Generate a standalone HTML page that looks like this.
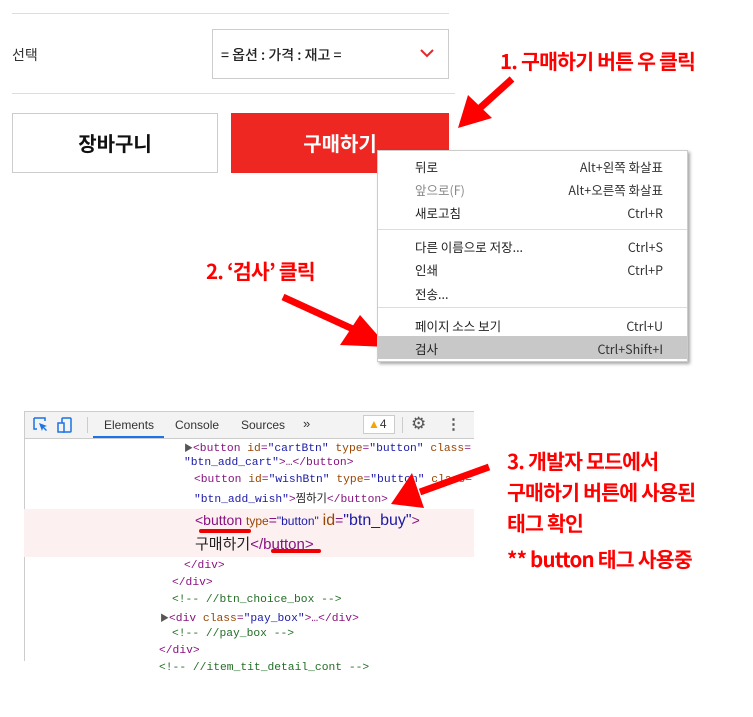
<!DOCTYPE html>
<html><head><meta charset="utf-8"><style>
*{margin:0;padding:0;box-sizing:border-box}
body{width:753px;height:717px;background:#fff;position:relative;overflow:hidden;font-family:"Liberation Sans","Noto Sans CJK KR",sans-serif}
.a{position:absolute}
.ann{position:absolute;color:#f00;font-weight:bold;font-size:20.5px;font-family:"Noto Sans CJK KR",sans-serif;letter-spacing:-0.8px;line-height:31px}
.mi{position:absolute;left:415px;font-size:12.5px;color:#222;font-family:"Noto Sans CJK KR",sans-serif}
.mr{position:absolute;right:90px;font-size:12.5px;color:#333;font-family:"Noto Sans CJK KR",sans-serif;text-align:right}
.clip{position:absolute;left:25px;top:439px;width:449px;height:240px;overflow:hidden}
.code{position:absolute;font-family:"Liberation Mono","Noto Sans CJK KR",monospace;font-size:11.3px;white-space:pre;color:#881280}
.at{color:#994500}.av{color:#1a1aa6}.cm{color:#236e25}.tx{color:#222}
</style></head><body>
<div class="a" style="left:12px;top:13px;width:437px;height:1px;background:#ddd"></div>
<div class="a" style="left:12px;top:93px;width:443px;height:1px;background:#ddd"></div>
<div class="a" style="left:12px;top:45px;font-size:14px;color:#333;font-family:'Noto Sans CJK KR',sans-serif">선택</div>
<div class="a" style="left:212px;top:29px;width:237px;height:50px;border:1px solid #ccc"></div>
<div class="a" style="left:221px;top:45px;font-size:14px;color:#222;font-family:'Noto Sans CJK KR',sans-serif;font-weight:500">= 옵션 : 가격 : 재고 =</div>
<svg class="a" style="left:420px;top:49px" width="14" height="9"><path d="M1 1 L7 7 L13 1" stroke="#e8262a" stroke-width="2" fill="none"/></svg>
<div class="a" style="left:12px;top:113px;width:206px;height:60px;border:1px solid #ccc;text-align:center;line-height:58px;font-size:20px;font-weight:bold;color:#111;font-family:'Noto Sans CJK KR',sans-serif">장바구니</div>
<div class="a" style="left:231px;top:113px;width:218px;height:60px;background:#ee2723;text-align:center;line-height:60px;font-size:20px;font-weight:bold;color:#fff;font-family:'Noto Sans CJK KR',sans-serif">구매하기</div>

<svg class="a" style="left:0;top:0" width="753" height="717">
<line x1="283" y1="297" x2="355" y2="330" stroke="#f00" stroke-width="7"/>
<polygon points="388,347 340,345 360,315" fill="#f00"/>
</svg>

<div class="a" style="left:377px;top:150px;width:311px;height:212px;background:#fff;border:1px solid #ccc;box-shadow:2px 2px 3px rgba(0,0,0,.35)"></div>
<div class="a" style="left:378px;top:229px;width:309px;height:1px;background:#ddd"></div>
<div class="a" style="left:378px;top:307px;width:309px;height:1px;background:#ddd"></div>
<div class="a" style="left:378px;top:336px;width:309px;height:23px;background:#c8c8c8"></div>
<div class="mi" style="top:157px">뒤로</div><div class="mr" style="top:157px">Alt+왼쪽 화살표</div>
<div class="mi" style="top:180px;color:#888">앞으로(F)</div><div class="mr" style="top:180px">Alt+오른쪽 화살표</div>
<div class="mi" style="top:203px">새로고침</div><div class="mr" style="top:203px">Ctrl+R</div>
<div class="mi" style="top:237px">다른 이름으로 저장...</div><div class="mr" style="top:237px">Ctrl+S</div>
<div class="mi" style="top:260px">인쇄</div><div class="mr" style="top:260px">Ctrl+P</div>
<div class="mi" style="top:284px">전송...</div>
<div class="mi" style="top:316px">페이지 소스 보기</div><div class="mr" style="top:316px">Ctrl+U</div>
<div class="mi" style="top:339px">검사</div><div class="mr" style="top:339px">Ctrl+Shift+I</div>

<div class="ann" style="left:500px;top:45px">1. 구매하기 버튼 우 클릭</div>
<div class="ann" style="left:206px;top:255px">2. ‘검사’ 클릭</div>
<div class="ann" style="left:507px;top:445px">3. 개발자 모드에서<br>구매하기 버튼에 사용된<br>태그 확인</div>
<div class="ann" style="left:507px;top:543px">** button 태그 사용중</div>

<!-- devtools -->
<div class="a" style="left:24px;top:411px;width:450px;height:28px;background:#f3f3f3;border-top:1px solid #ccc;border-bottom:1px solid #ccc"></div>
<div class="a" style="left:24px;top:411px;width:1px;height:250px;background:#ccc"></div>
<svg class="a" style="left:33px;top:416px" width="50" height="18"><path d="M1 2h11v3M1 2v11h3" stroke="#1a73e8" stroke-width="1.5" fill="none"/><path d="M6 7l8 3-3 1 3 3-1 1-3-3-1 3z" fill="#1a73e8"/><rect x="29" y="2" width="9" height="14" rx="1" stroke="#1a73e8" stroke-width="1.5" fill="none"/><rect x="25" y="7" width="6" height="9" stroke="#1a73e8" stroke-width="1.5" fill="#f3f3f3"/></svg>
<div class="a" style="left:87px;top:417px;width:1px;height:16px;background:#ccc"></div>
<div class="a" style="left:104px;top:418px;font-size:12px;color:#333">Elements</div>
<div class="a" style="left:93px;top:436px;width:71px;height:2px;background:#1a73e8"></div>
<div class="a" style="left:175px;top:418px;font-size:12px;color:#333">Console</div>
<div class="a" style="left:241px;top:418px;font-size:12px;color:#333">Sources</div>
<div class="a" style="left:303px;top:416px;font-size:13px;color:#333">»</div>
<div class="a" style="left:363px;top:415px;width:32px;height:19px;border:1px solid #ccc;background:#fff;font-size:12px;color:#333;line-height:17px;padding-left:4px"><span style="color:#f2a600">▲</span>4</div>
<div class="a" style="left:402px;top:417px;width:1px;height:16px;background:#ccc"></div>
<div class="a" style="left:411px;top:414px;font-size:17px;color:#555">⚙</div>
<div class="a" style="left:446px;top:415px;font-size:15px;color:#555;font-weight:bold">⋮</div>

<div class="a" style="left:24px;top:509px;width:450px;height:48px;background:#fdf0f0"></div>
<div class="clip">
<div class="code" style="left:159px;top:2px"><span style="color:#555;font-size:9px">▶</span>&lt;button <span class="at">id</span>=<span class="av">"cartBtn"</span> <span class="at">type</span>=<span class="av">"button"</span> <span class="at">class</span>=</div>
<div class="code" style="left:159px;top:18px"><span class="av">"btn_add_cart"</span>&gt;…&lt;/button&gt;</div>
<div class="code" style="left:169px;top:35px">&lt;button <span class="at">id</span>=<span class="av">"wishBtn"</span> <span class="at">type</span>=<span class="av">"button"</span> <span class="at">class</span>=</div>
<div class="code" style="left:169px;top:51px"><span class="av">"btn_add_wish"</span>&gt;<span class="tx" style="font-family:'Noto Sans CJK KR'">찜하기</span>&lt;/button&gt;</div>
<div class="code" style="left:170px;top:73px;font-family:'Liberation Sans','Noto Sans CJK KR',sans-serif;font-size:14px">&lt;button <span class="at" style="font-size:12px">type</span>=<span class="av" style="font-size:12px">"button"</span> <span class="at" style="font-size:16px">id</span>=<span class="av" style="font-size:16px">"btn_buy"</span>&gt;</div>
<div class="code" style="left:170px;top:94px;font-family:'Liberation Sans','Noto Sans CJK KR',sans-serif;font-size:15px"><span class="tx">구매하기</span>&lt;/button&gt;</div>
<div class="code" style="left:159px;top:121px">&lt;/div&gt;</div>
<div class="code" style="left:147px;top:138px">&lt;/div&gt;</div>
<div class="code cm" style="left:147px;top:155px">&lt;!-- //btn_choice_box --&gt;</div>
<div class="code" style="left:135px;top:172px"><span style="color:#555;font-size:9px">▶</span>&lt;div <span class="at">class</span>=<span class="av">"pay_box"</span>&gt;…&lt;/div&gt;</div>
<div class="code cm" style="left:147px;top:189px">&lt;!-- //pay_box --&gt;</div>
<div class="code" style="left:134px;top:206px">&lt;/div&gt;</div>
<div class="code cm" style="left:134px;top:223px">&lt;!-- //item_tit_detail_cont --&gt;</div>
</div>
<div class="a" style="left:199px;top:529px;width:52px;height:4px;border-radius:2px;background:#e00"></div>
<div class="a" style="left:271px;top:549px;width:50px;height:4px;border-radius:2px;background:#e00"></div>

<svg class="a" style="left:0;top:0" width="753" height="717">
<line x1="512" y1="79" x2="480" y2="108" stroke="#f00" stroke-width="7"/>
<polygon points="458,128 468,95 492,118" fill="#f00"/>
<line x1="489" y1="467" x2="420" y2="492" stroke="#f00" stroke-width="7"/>
<polygon points="391,504 412,473 424,508" fill="#f00"/>
</svg>
</body></html>
